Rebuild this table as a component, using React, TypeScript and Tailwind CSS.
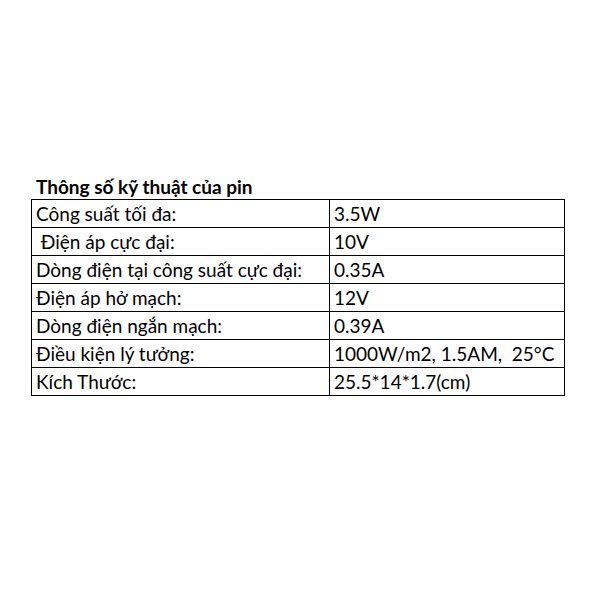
import React from "react";

const rows: [string, string][] = [
  ["Công suất tối đa:", "3.5W"],
  ["\u00a0Điện áp cực đại:", "10V"],
  ["Dòng điện tại công suất cực đại:", "0.35A"],
  ["Điện áp hở mạch:", "12V"],
  ["Dòng điện ngắn mạch:", "0.39A"],
  ["Điều kiện lý tưởng:", "1000W/m2, 1.5AM,\u00a0 25°C"],
  ["Kích Thước:", "25.5*14*1.7(cm)"],
];

export default function App() {
  return (
    <div className="w-[610px] h-[610px] bg-white text-black font-['Lato','Open_Sans',sans-serif] pt-[174px] pl-[31px]">
      <div className="pl-[5px] h-[25px] text-[19px] font-bold leading-[25px]">Thông số kỹ thuật của pin</div>
      <table className="border-collapse">
        <tbody>
          {rows.map(([k, v], i) => (
            <tr key={i} className="h-[28px]">
              <td className="w-[298px] border border-black px-[4px] py-0 text-[19px] leading-[26px] whitespace-pre">{k}</td>
              <td className="w-[235px] border border-black px-[4px] py-0 text-[19px] leading-[26px] whitespace-pre">{v}</td>
            </tr>
          ))}
        </tbody>
      </table>
    </div>
  );
}
